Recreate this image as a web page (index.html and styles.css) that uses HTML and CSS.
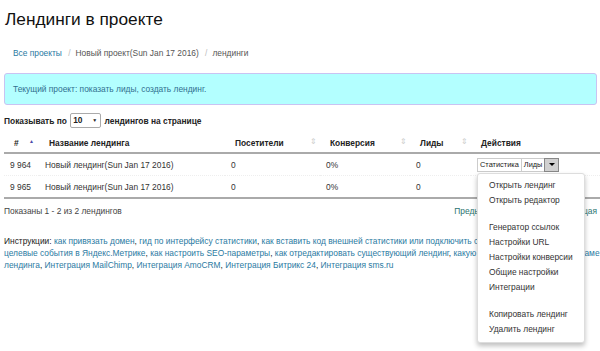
FILE: index.html
```html
<!DOCTYPE html>
<html lang="ru">
<head>
  <meta charset="UTF-8">
  <title>Лендинги в проекте</title>
  <link rel="stylesheet" href="styles.css">
</head>
<body>
  <div class="page">
    <h1>Лендинги в проекте</h1>

    <ol class="breadcrumb">
      <li><a href="#">Все проекты</a></li>
      <li>Новый проект(Sun Jan 17 2016)</li>
      <li>лендинги</li>
    </ol>

    <div class="alert">
      Текущий проект: <a href="#">показать лиды</a>, <a href="#">создать лендинг</a>.
    </div>

    <div class="length">
      Показывать по
      <span class="select">10 <span class="arrow">&#9660;</span></span>
      лендингов на странице
    </div>

    <table class="grid">
      <thead>
        <tr>
          <th class="c1"># <span class="sort active">&#9650;</span></th>
          <th class="c2">Название лендинга</th>
          <th class="c3">Посетители <span class="sort">&#8661;</span></th>
          <th class="c4">Конверсия <span class="sort">&#8661;</span></th>
          <th class="c5">Лиды <span class="sort">&#8661;</span></th>
          <th class="c6">Действия</th>
        </tr>
      </thead>
      <tbody>
        <tr>
          <td>9 964</td>
          <td>Новый лендинг(Sun Jan 17 2016)</td>
          <td>0</td>
          <td>0%</td>
          <td>0</td>
          <td>
            <div class="btn-group">
              <span class="btn">Статистика</span><span class="btn">Лиды</span><span class="btn toggle"><span class="caret"></span></span>
              <ul class="menu">
                <li><a href="#">Открыть лендинг</a></li>
                <li><a href="#">Открыть редактор</a></li>
                <li class="divider"></li>
                <li><a href="#">Генератор ссылок</a></li>
                <li><a href="#">Настройки URL</a></li>
                <li><a href="#">Настройки конверсии</a></li>
                <li><a href="#">Общие настройки</a></li>
                <li><a href="#">Интеграции</a></li>
                <li class="divider"></li>
                <li><a href="#">Копировать лендинг</a></li>
                <li><a href="#">Удалить лендинг</a></li>
              </ul>
            </div>
          </td>
        </tr>
        <tr>
          <td>9 965</td>
          <td>Новый лендинг(Sun Jan 17 2016)</td>
          <td>0</td>
          <td>0%</td>
          <td>0</td>
          <td>
            <div class="btn-group">
              <span class="btn">Статистика</span><span class="btn">Лиды</span><span class="btn"><span class="caret"></span></span>
            </div>
          </td>
        </tr>
      </tbody>
    </table>

    <div class="info-row">
      <div class="info">Показаны 1 - 2 из 2 лендингов</div>
      <div class="paging"><a href="#">Предыдущая</a><a href="#">1</a><a href="#">Следующая</a></div>
    </div>

    <p class="howto">
      Инструкции: <a href="#">как привязать домен</a>, <a href="#">гид по интерфейсу статистики</a>,
      <a href="#">как вставить код внешней статистики или подключить счетчики</a>, <a href="#">как настроить</a>
      <a href="#">целевые события в Яндекс.Метрике</a>, <a href="#">как настроить SEO-параметры</a>,
      <a href="#">как отредактировать существующий лендинг</a>, <a href="#">какую структуру использовать в раме</a>
      <a href="#">лендинга</a>, <a href="#">Интеграция MailChimp</a>, <a href="#">Интеграция AmoCRM</a>,
      <a href="#">Интеграция Битрикс 24</a>, <a href="#">Интеграция sms.ru</a>
    </p>
  </div>
</body>
</html>
```

FILE: styles.css
```css
body {
  margin: 0;
  padding: 0;
  min-height: 351px;
  background: #fff;
  color: #333;
  font-family: "Liberation Sans", Arial, sans-serif;
  font-size: 8.4px;
}

a {
  color: #2a7aa2;
  text-decoration: none;
}

.page {
  padding: 0 0 0 4px;
  width: 596px;
}

h1 {
  margin: 0;
  padding: 9px 0 0 1px;
  height: 24px;
  font-size: 17.3px;
  font-weight: normal;
  line-height: 20px;
  color: #111;
}

.breadcrumb {
  list-style: none;
  margin: 0;
  padding: 12px 9px;
  height: 16px;
  line-height: 16px;
  color: #555;
}

.breadcrumb li {
  display: inline;
}

.breadcrumb li + li:before {
  content: "/";
  color: #bbb;
  padding: 0 5px 0 4px;
}

.alert {
  width: 583px;
  height: 30px;
  padding: 0 0 0 8px;
  line-height: 31px;
  background: #b3ffff;
  border: 1px solid #c9c3f2;
  border-radius: 3px;
  color: #31708f;
}

.alert a {
  color: #31708f;
}

.length {
  margin-top: 8px;
  height: 16px;
  line-height: 16px;
  font-weight: bold;
  color: #222;
}

.select {
  display: inline-block;
  width: 27px;
  height: 13px;
  line-height: 13px;
  margin: 0 1px;
  padding-left: 2px;
  border: 1px solid #aaa;
  border-radius: 2px;
  vertical-align: middle;
  position: relative;
  top: -1px;
  font-weight: bold;
}

.select .arrow {
  font-size: 5px;
  float: right;
  margin-right: 3px;
}

.grid {
  margin-top: 5px;
  width: 596px;
  border-collapse: collapse;
  table-layout: fixed;
}

.grid th {
  position: relative;
  text-align: left;
  font-weight: bold;
  color: #222;
  height: 18px;
  padding: 0 0 0 10px;
  border-bottom: 2px solid #aaa;
  vertical-align: middle;
}

.grid th.c1 { width: 25px; }
.grid th.c2 { width: 176px; }
.grid th.c3 { width: 85px; }
.grid th.c4 { width: 80px; }
.grid th.c5 { width: 51px; }

.sort {
  position: absolute;
  right: 3px;
  top: 3px;
  font-size: 8px;
  color: #ccc;
  font-weight: normal;
}

.sort.active {
  color: #4a4aa8;
  font-size: 5px;
  top: 4px;
  right: 5px;
}

.grid td {
  padding: 0 0 0 6px;
  height: 21px;
  border-top: 1px dotted #eee;
  white-space: nowrap;
  vertical-align: middle;
}

.grid tbody tr:first-child td {
  border-top: none;
}

.grid tbody tr:last-child td {
  border-bottom: 2px solid #aaa;
}

.btn-group {
  position: relative;
  display: flex;
  height: 14px;
}

.btn {
  display: block;
  height: 12px;
  line-height: 12px;
  padding: 0 2px;
  border: 1px solid #ccc;
  background: #fff;
  color: #222;
  font-size: 7.4px;
  margin-right: -1px;
}

.btn.toggle {
  width: 9px;
  background: #d0d0d0;
  border-color: #888;
  display: flex;
  align-items: center;
  justify-content: center;
}

.btn .caret {
  display: block;
  width: 0;
  height: 0;
  margin: 0 auto;
  border-left: 3px solid transparent;
  border-right: 3px solid transparent;
  border-top: 3px solid #000;
}

.menu {
  position: absolute;
  left: 0;
  top: 15px;
  z-index: 10;
  width: 106px;
  list-style: none;
  margin: 0;
  padding: 4px 0 5px;
  background: #fff;
  border: 1px solid #ddd;
  border-radius: 3px;
  box-shadow: 0 3px 5px rgba(0, 0, 0, 0.25);
}

.menu li a {
  display: block;
  padding: 0 0 0 11px;
  height: 15px;
  line-height: 15px;
  color: #333;
  font-size: 8.4px;
}

.menu .divider {
  height: 12px;
}

.info-row {
  display: flex;
  justify-content: space-between;
  height: 24px;
  line-height: 24px;
}

.info {
  color: #444;
}

.paging a {
  color: #2a7370;
  padding: 0 10px;
}

.paging a:last-child {
  padding-right: 3px;
}

.howto {
  margin: 12px 0 0;
  line-height: 12px;
  color: #222;
}
```
